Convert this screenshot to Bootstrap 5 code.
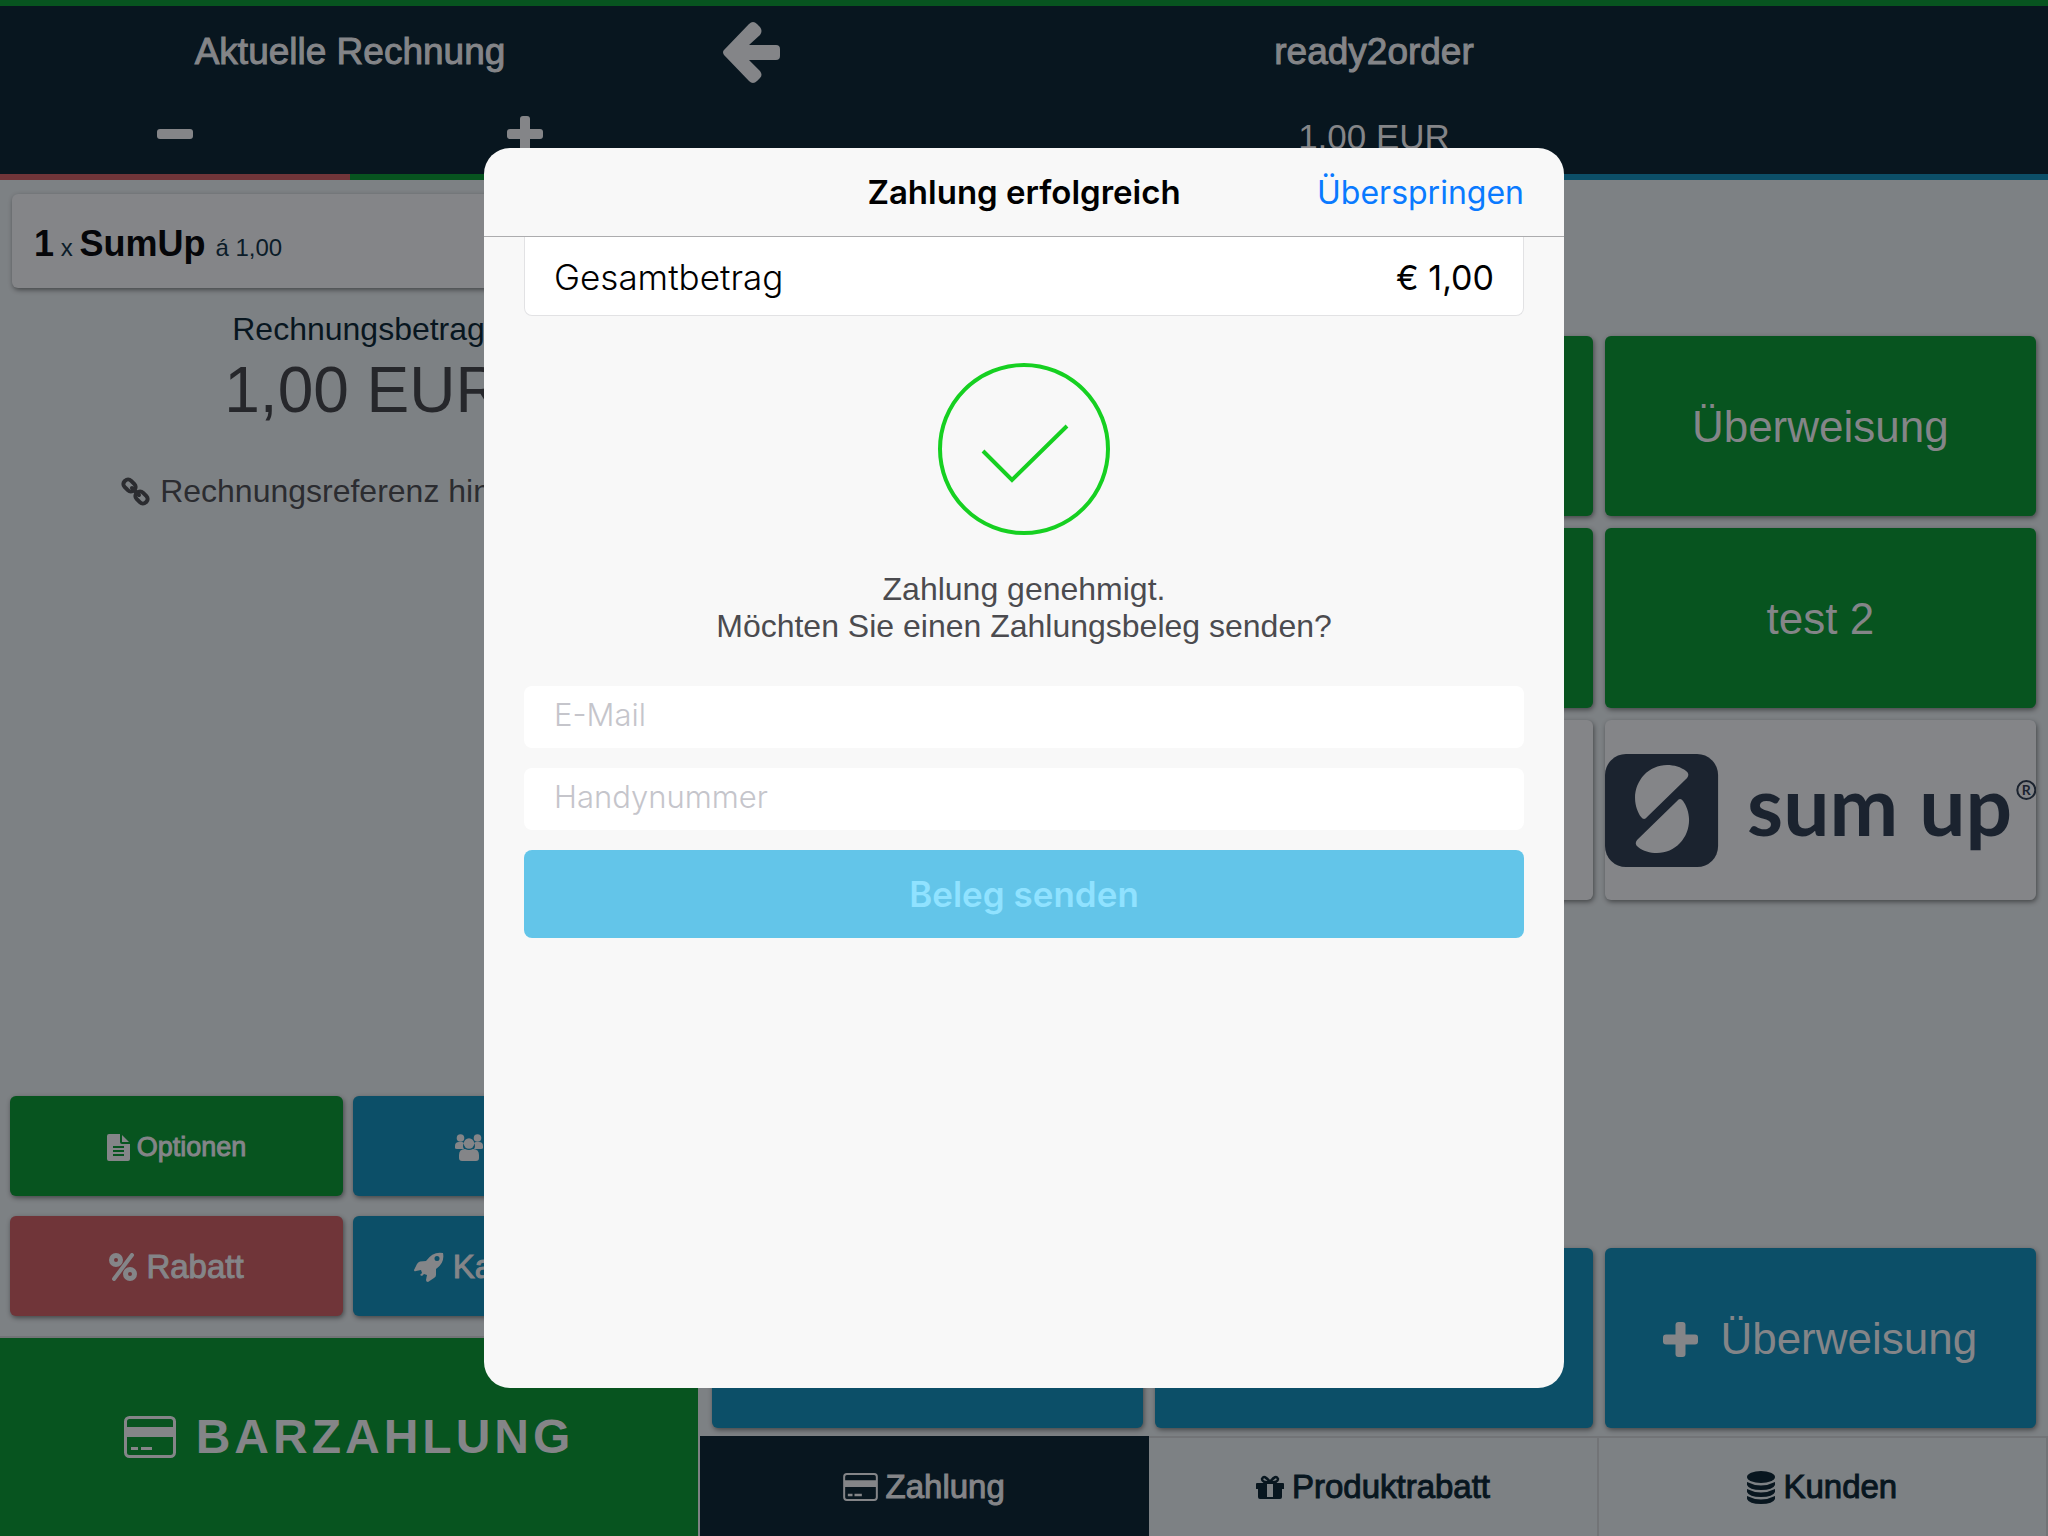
<!DOCTYPE html>
<html lang="de">
<head>
<meta charset="utf-8">
<meta name="viewport" content="width=device-width, initial-scale=1">
<title>ready2order – Zahlung</title>
<link rel="stylesheet" href="https://cdn.jsdelivr.net/npm/bootstrap@5.3.0/dist/css/bootstrap.min.css">
<style>
  :root {
    --pos-navy: #08161f; --pos-green: #07541f; --pos-blue: #0c4f68; --pos-red: #703539;
    --pos-bg: #7d8184; --pos-card: #848588; --pos-line: #727477;
  }
  body { font-family: "Liberation Sans", Arial, sans-serif; background: var(--pos-bg); color: #26272b; font-size: 32px; }
  button { font-family: inherit; }
  svg { display: block; flex: none; }
  .pos-shell { border-top: 6px solid var(--pos-green); }
  .bill-col { width: 34.18%; border-right: 2px solid var(--pos-bg); }
  .bill-col > header { margin-right: -2px; }
  .bar-top { background: var(--pos-navy); color: var(--pos-card); }
  .bar-title { height: 90px; padding-top: 2px; font-size: 37px; line-height: 44px; }
  .bar-row { height: 78px; font-size: 35px; }
  .plain-btn.bar-row { padding-bottom: 2px; }
  .bar-amount { padding-top: 4px; }
  .half-accent { border-bottom: 6px solid; }
  .accent-red { border-color: var(--pos-red); }
  .accent-green { border-color: var(--pos-green); }
  .accent-blue { border-color: var(--pos-blue); }
  .plain-btn { background: none; border: 0; padding: 0; color: inherit; }
  .medium-text { -webkit-text-stroke: 1px currentColor; }
  .back-btn { padding-left: 23px; }
  .bill-body { padding: 14px 12px 0; }
  .bill-item { height: 94px; padding: 6px 22px 0; border-radius: 6px; background: var(--pos-card); box-shadow: 1px 2px 5px rgba(0,0,0,.45); color: #0b1c29; font-size: 24px; line-height: 88px; }
  .bill-item strong { font-size: 36px; color: #050609; }
  .bill-sum { margin-top: 22px; padding-left: 28px; }
  .sum-label { line-height: 38px; color: #08161f; }
  .sum-value { font-size: 64px; line-height: 84px; }
  .sum-ref { margin-top: 41px; line-height: 36px; gap: 10px; color: #2b2c30; }
  .tile { border: 0; border-radius: 6px; color: var(--pos-card); box-shadow: 1px 2px 5px rgba(0,0,0,.45); }
  .tile-green { background: var(--pos-green); }
  .tile-blue { background: var(--pos-blue); }
  .tile-red { background: var(--pos-red); }
  .tile-light { background: var(--pos-card); }
  .actions { padding: 0 12px 20px 10px; gap: 20px; }
  .actions > div { gap: 10px; }
  .action-tile { height: 100px; padding: 2px 0 0; font-size: 33px; gap: 9px; flex: 1 1 0; }
  .action-small { font-size: 27px; gap: 7px; }
  .cash-btn { height: 200px; border: 0; border-top: 2px solid var(--pos-line); background: var(--pos-green); color: var(--pos-card); font-size: 48px; font-weight: 700; letter-spacing: 4px; gap: 20px; }
  .pay-area { padding: 156px 0 8px; }
  .tile-rows { row-gap: 12px; }
  .tile-rows > div { padding: 0 6px; }
  .tile-rows > div:nth-child(3n+1) { padding-left: 12px; }
  .tile-rows > div:nth-child(3n) { padding-right: 12px; }
  .pay-tile { display: flex; align-items: center; justify-content: center; width: 100%; height: 180px; font-size: 44px; gap: 22px; padding: 2px 0 0; }
  .logo-tile { padding: 0; }
  .tab-btn { flex: 1 1 0; height: 100px; border: 0; border-top: 2px solid var(--pos-line); border-right: 2px solid var(--pos-line); background: var(--pos-bg); color: var(--pos-navy); font-size: 33px; gap: 8px; }
  .tab-btn.active { background: var(--pos-navy); border-color: var(--pos-navy); color: var(--pos-card); }
  .modal-dialog.pay-dialog { max-width: 1080px; }
  .pay-sheet { min-height: 1240px; border: 0; border-radius: 26px; background: #f8f8f8; color: #000; font-family: Inter, "Liberation Sans", sans-serif; }
  .sheet-head { height: 89px; border-bottom: 1px solid #acacae; padding: 2px 40px 0; display: grid; grid-template-columns: 1fr auto 1fr; align-items: center; }
  .sheet-head h1 { font-size: 33px; font-weight: 600; margin: 0; }
  .sheet-head a { font-size: 32px; color: #0a7aff; justify-self: end; }
  .sheet-body { padding: 0 40px; }
  .total-row { height: 79px; padding: 2px 29px 0; font-size: 35px; background: #fff; border: 1px solid #e2e2e4; border-top: 0; border-radius: 0 0 8px 8px; }
  .total-row dt { font-weight: 300; }
  .total-row dd { font-size: 34px; }
  .done-mark { margin: 47px auto 36px; }
  .done-text { font-family: "Liberation Sans", Arial, sans-serif; font-size: 32px; line-height: 37px; color: #4b4b4f; margin-bottom: 41px; }
  .sheet-form { gap: 20px; }
  .sheet-form .form-control { height: 62px; border: 0; border-radius: 8px; padding: 0 30px 6px; font-size: 31px; font-weight: 300; background: #fff; }
  .sheet-form .form-control::placeholder { color: #c5c5cb; }
  .send-btn, .send-btn:disabled { height: 88px; border: 0; border-radius: 8px; background: #63c5e9; color: #90e2ff; font-size: 35px; font-weight: 600; opacity: 1; }
</style>
<script src="https://cdn.jsdelivr.net/npm/bootstrap@5.3.0/dist/js/bootstrap.bundle.min.js"></script>
</head>
<body>
<div class="pos-shell d-flex min-vh-100">

  <aside class="bill-col d-flex flex-column flex-shrink-0">
    <header class="bar-top">
      <div class="bar-title medium-text d-flex align-items-center justify-content-center">Aktuelle Rechnung</div>
      <div class="d-flex">
        <div class="w-50 half-accent accent-red"><button class="plain-btn bar-row w-100 d-flex align-items-center justify-content-center" aria-label="Weniger"><svg width="36" height="36" viewBox="0 0 36 36"><rect y="13" width="36" height="10" rx="3" fill="currentColor"/></svg></button></div>
        <div class="w-50 half-accent accent-green"><button class="plain-btn bar-row w-100 d-flex align-items-center justify-content-center" aria-label="Mehr"><svg width="36" height="36" viewBox="0 0 36 36" fill="currentColor"><rect y="13" width="36" height="10" rx="3"/><rect x="13" width="10" height="36" rx="3"/></svg></button></div>
      </div>
    </header>

    <div class="bill-body flex-grow-1">
      <div class="bill-item"><strong>1</strong> x <strong>SumUp </strong>á 1,00</div>
      <div class="bill-sum text-center">
        <div class="sum-label">Rechnungsbetrag:</div>
        <div class="sum-value">1,00 EUR</div>
        <button class="plain-btn sum-ref d-inline-flex align-items-center"><svg width="29" height="29" viewBox="0 0 29 29" fill="none" stroke="currentColor" stroke-width="4"><rect x="2" y="4" width="13" height="9" rx="4" transform="rotate(45 8.500 8.500)"/><rect x="14" y="16" width="13" height="9" rx="4" transform="rotate(45 20.500 20.500)"/><path d="M11 11l7 7" stroke-linecap="round"/></svg>Rechnungsreferenz hinzufügen</button>
      </div>
    </div>

    <div class="actions d-flex flex-column">
      <div class="d-flex">
        <button class="tile tile-green action-tile action-small medium-text d-flex align-items-center justify-content-center"><svg width="23" height="27" viewBox="0 0 23 27"><path fill="currentColor" fill-rule="evenodd" d="M2 0h11v8q0 2 2 2h8v15q0 2-2 2H2q-2 0-2-2V2Q0 0 2 0ZM6 12v2h11v-2ZM6 16v2h11v-2ZM6 20v2h11v-2Z"/><path fill="currentColor" d="M15 1l7 7h-7z"/></svg>Optionen</button>
        <button class="tile tile-blue action-tile action-small medium-text d-flex align-items-center justify-content-center"><svg width="28" height="27" viewBox="0 0 28 27" fill="currentColor"><circle cx="5.500" cy="4" r="3.800"/><circle cx="22.500" cy="4" r="3.800"/><path d="M0 14v-2q0-4 4-4h3q1 0 2 1-2 3 0 6H2q-2 0-2-1ZM28 14v-2q0-4-4-4h-3q-1 0-2 1 2 3 0 6h7q2 0 2-1Z"/><circle cx="14" cy="9.500" r="5.200"/><path d="M4 24v-3q0-6 6-6 4 2 8 0 6 0 6 6v3q0 3-3 3H7q-3 0-3-3Z"/></svg>Kunden</button>
      </div>
      <div class="d-flex">
        <button class="tile tile-red action-tile medium-text d-flex align-items-center justify-content-center"><svg width="28" height="28" viewBox="0 0 28 28" fill="none" stroke="currentColor" stroke-width="5"><circle cx="7" cy="7" r="4.500"/><circle cx="21" cy="21" r="4.500"/><path d="M23 2L5 26" stroke-linecap="round" stroke-width="4"/></svg>Rabatt</button>
        <button class="tile tile-blue action-tile medium-text d-flex align-items-center justify-content-center"><svg width="30" height="30" viewBox="0 0 30 30"><path fill="currentColor" fill-rule="evenodd" d="M29 1Q19-1 12 9L6 9.500Q4 10 3 12L0 18Q0 20 2 19l5-1 1 3-2 2 2 1 2-2 3 1-1 5q0 2 2 2l6-4q2-1 2-3l0-6Q31 11 29 1ZM23 4a2.500 2.500 0 1 1 0 5 2.500 2.500 0 0 1 0-5Z"/></svg>Kassenlade</button>
      </div>
    </div>
    <button class="cash-btn d-flex align-items-center justify-content-center"><svg width="52" height="42" viewBox="0 0 52 42"><rect x="1.500" y="1.500" width="49" height="39" rx="4" fill="none" stroke="currentColor" stroke-width="3"/><path fill="currentColor" d="M2 11h48v10H2zM7 31h7v3H7zM17 31h11v3H17z"/></svg>BARZAHLUNG</button>
  </aside>

  <main class="d-flex flex-column flex-grow-1">
    <header class="bar-top half-accent accent-blue">
      <div class="bar-title row g-0 align-items-center">
        <div class="col"><button class="plain-btn back-btn d-block" aria-label="Zurück"><svg width="57" height="61" viewBox="0 0 57 61"><path fill="currentColor" d="M1 28L26 2Q30-2 34 2L37 5Q40 9 37 13L26 23H53Q57 23 57 27V34Q57 38 53 38H26L37 49Q40 53 37 56L34 59Q30 63 26 59L1 33Q-1 30 1 28Z"/></svg></button></div>
        <div class="col-auto medium-text">ready2order</div>
        <div class="col"></div>
      </div>
      <div class="bar-row bar-amount d-flex align-items-center justify-content-center">1,00 EUR</div>
    </header>

    <section class="pay-area flex-grow-1 d-flex flex-column justify-content-between">
      <div class="tile-rows row g-0">
        <div class="col-4"><button class="tile tile-green pay-tile" aria-label="Zahlungsart 1"></button></div>
        <div class="col-4"><button class="tile tile-green pay-tile" aria-label="Zahlungsart 2"></button></div>
        <div class="col-4"><button class="tile tile-green pay-tile">Überweisung</button></div>
        <div class="col-4"><button class="tile tile-green pay-tile" aria-label="Zahlungsart 4"></button></div>
        <div class="col-4"><button class="tile tile-green pay-tile" aria-label="Zahlungsart 5"></button></div>
        <div class="col-4"><button class="tile tile-green pay-tile">test 2</button></div>
        <div class="col-4"><button class="tile tile-light pay-tile" aria-label="Zahlungsart 7"></button></div>
        <div class="col-4"><button class="tile tile-light pay-tile" aria-label="Zahlungsart 8"></button></div>
        <div class="col-4"><button class="tile tile-light pay-tile logo-tile">
          <svg class="w-100" viewBox="0 -34 431 180" fill="#1b232f">
            <rect width="113" height="113" rx="21"/>
            <g fill="#848588"><path id="half" d="M81 17C76 13 69 11 62 11 44 11 30 26 30 44 30 52 33 59 36 63Q39 67 42 63L82 24Q85 20 81 17Z"/><use href="#half" transform="rotate(180 57 55)"/></g>
            <g font-family="'Liberation Sans Narrow', Lato, sans-serif" font-weight="700" font-size="82"><text x="142" y="82">sum</text><text x="314" y="82">up</text></g>
            <circle cx="421" cy="36" r="9" fill="none" stroke="#1b232f" stroke-width="2"/><text x="421" y="41" font-family="Lato, sans-serif" font-weight="700" font-size="14" text-anchor="middle">R</text>
          </svg></button></div>
      </div>
      <div class="tile-rows row g-0">
        <div class="col-4"><button class="tile tile-blue pay-tile" aria-label="Zahlungsart hinzufügen 1"></button></div>
        <div class="col-4"><button class="tile tile-blue pay-tile" aria-label="Zahlungsart hinzufügen 2"></button></div>
        <div class="col-4"><button class="tile tile-blue pay-tile"><svg width="35" height="35" viewBox="0 0 35 35" fill="currentColor"><rect y="12.500" width="35" height="10" rx="3"/><rect x="12.500" width="10" height="35" rx="3"/></svg>Überweisung</button></div>
      </div>
    </section>

    <nav class="d-flex medium-text">
      <button class="tab-btn active d-flex align-items-center justify-content-center"><svg width="35" height="28" viewBox="0 0 52 42"><rect x="1.500" y="1.500" width="49" height="39" rx="4" fill="none" stroke="currentColor" stroke-width="3"/><path fill="currentColor" d="M2 11h48v10H2zM7 31h7v4H7zM17 31h11v4H17z"/></svg>Zahlung</button>
      <button class="tab-btn d-flex align-items-center justify-content-center"><svg width="28" height="24" viewBox="0 0 28 24"><path fill="currentColor" d="M1 8H27Q28 8 28 9V14H26V22Q26 24 24 24H4Q2 24 2 22V14H0V9Q0 8 1 8Z"/><rect x="11" y="9" width="6" height="13" fill="#7d8184"/><rect x="13" y="11" width="2" height="0"/><path d="M14 7Q6 8 6 4 8-1 14 7 20-1 22 4 22 8 14 7" fill="none" stroke="currentColor" stroke-width="2.500"/></svg>Produktrabatt</button>
      <button class="tab-btn d-flex align-items-center justify-content-center"><svg width="28" height="33" viewBox="0 0 28 33" fill="currentColor"><ellipse cx="14" cy="6" rx="14" ry="6"/><path d="M0 11Q14 18 28 11V14Q26 19 14 19 2 19 0 14ZM0 18Q14 25 28 18V21Q26 26 14 26 2 26 0 21ZM0 25Q14 32 28 25V28Q26 33 14 33 2 33 0 28Z"/></svg>Kunden</button>
    </nav>
  </main>
</div>

<div class="modal d-block" tabindex="-1" role="dialog" aria-labelledby="sheetTitle">
  <div class="modal-dialog modal-dialog-centered pay-dialog">
    <div class="modal-content pay-sheet">
      <div class="sheet-head">
        <span></span>
        <h1 id="sheetTitle">Zahlung erfolgreich</h1>
        <a href="#" class="text-decoration-none">Überspringen</a>
      </div>
      <div class="sheet-body">
        <dl class="total-row d-flex align-items-center justify-content-between mb-0"><dt>Gesamtbetrag</dt><dd class="mb-0">€ 1,00</dd></dl>
        <svg class="done-mark" width="172" height="172" viewBox="0 0 172 172" fill="none" stroke="#16d021" stroke-width="4"><circle cx="86" cy="86" r="84"/><path d="M45 88L74 117 129 63"/></svg>
        <p class="done-text text-center">Zahlung genehmigt.<br>Möchten Sie einen Zahlungsbeleg senden?</p>
        <form class="sheet-form d-flex flex-column">
          <input type="email" class="form-control" placeholder="E-Mail" aria-label="E-Mail">
          <input type="tel" class="form-control" placeholder="Handynummer" aria-label="Handynummer">
          <button type="submit" class="btn send-btn" disabled>Beleg senden</button>
        </form>
      </div>
    </div>
  </div>
</div>
</body>
</html>
